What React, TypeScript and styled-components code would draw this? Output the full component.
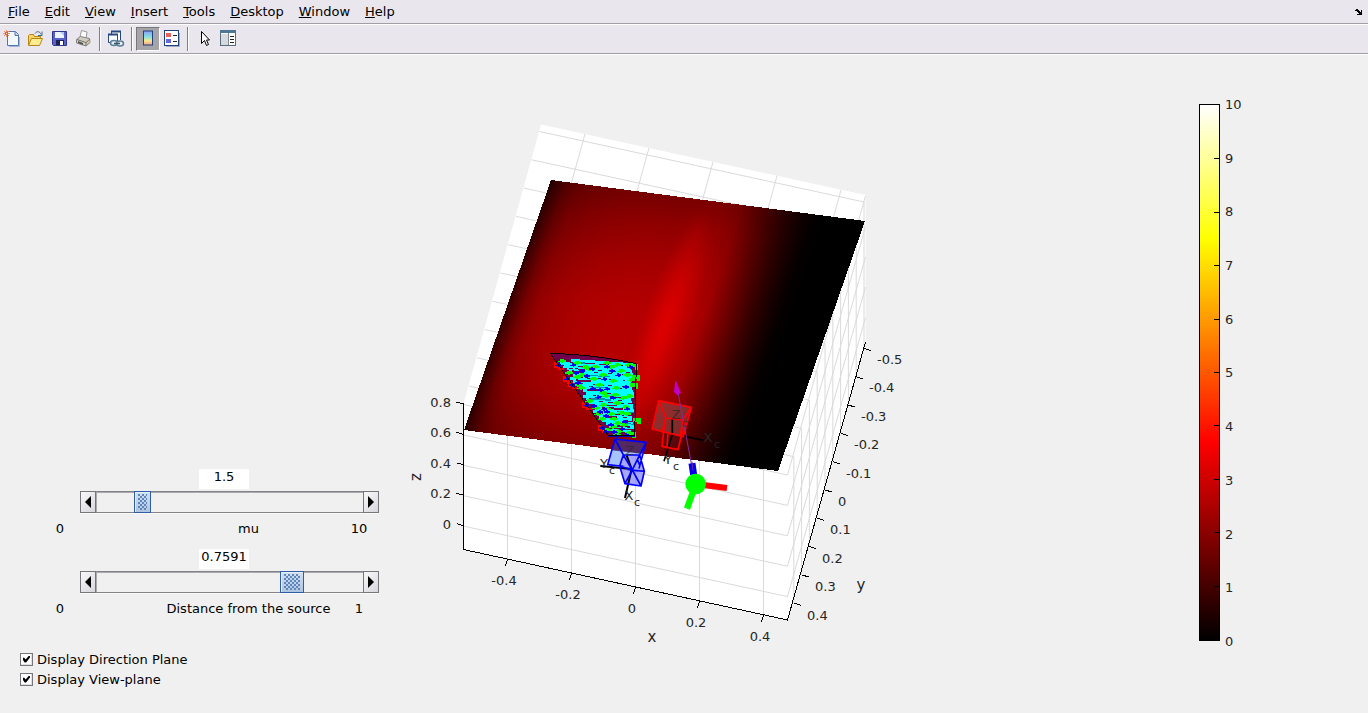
import React, { useState } from "react";
import styled, { createGlobalStyle } from "styled-components";

const GlobalStyle = createGlobalStyle`
  * { box-sizing: border-box; }
  body {
    margin: 0;
    background: #f0f0f0;
    color: #000;
    font-family: "DejaVu Sans", sans-serif;
    font-size: 13px;
  }
`;

const Page = styled.div`
  display: flex;
  flex-direction: column;
  min-height: 100vh;
`;

const MenuBar = styled.nav`
  display: flex;
  align-items: center;
  gap: 15px;
  height: 25px;
  padding: 0 6px 0 8px;
  background: #e9e7ed;
  border-bottom: 1px solid #fff;
  box-shadow: inset 0 -1px 0 #a09fa3;
`;

const MenuItem = styled.button`
  border: 0;
  padding: 0;
  background: none;
  color: inherit;
  font: inherit;
  line-height: 20px;
  &::first-letter { text-decoration: underline; }
`;

const DockButton = styled(MenuItem)`
  display: flex;
  margin-left: auto;
`;

const ToolBar = styled.div`
  display: flex;
  align-items: center;
  height: 30px;
  padding: 1px 0 2px;
  background: #e9e7ed;
  border-bottom: 1px solid #fff;
  box-shadow: inset 0 -1px 0 #a09fa3;
`;

const ToolButton = styled.button<{ $pressed?: boolean }>`
  display: flex;
  align-items: center;
  justify-content: center;
  width: 24px;
  height: 24px;
  padding: 0;
  border: 1px solid;
  border-color: ${(p) => (p.$pressed ? "#77767a #fff #fff #77767a" : "transparent")};
  background: ${(p) => (p.$pressed ? "#a5a4a8" : "none")};
`;

const Separator = styled.span`
  width: 2px;
  height: 24px;
  margin: 0 3px;
  background: #7f7e82;
  border-right: 1px solid #fff;
`;

const Figure = styled.main`
  display: grid;
  grid-template-columns: 400px minmax(0, 1fr) 200px;
  flex: 1;
`;

const Controls = styled.section`
  display: flex;
  flex-direction: column;
  justify-content: flex-end;
  gap: 10px;
  padding: 0 21px 24px 40px;
`;

const SliderGroup = styled.div`
  display: flex;
  flex-direction: column;
`;

const ValueBox = styled.input`
  width: 50px;
  height: 20px;
  margin: 0 0 2px 159px;
  padding: 0 0 5px;
  border: 0;
  background: #fff;
  color: inherit;
  font: inherit;
  text-align: center;
`;

const SliderRow = styled.div`
  display: flex;
  height: 22px;
  margin: 0 0 6px 40px;
  box-shadow: 0 1px 0 #fafafa;
`;

const StepButton = styled.button`
  display: flex;
  align-items: center;
  justify-content: center;
  width: 16px;
  padding: 0;
  border: 1px solid #77767a;
  background: linear-gradient(135deg, #f8f8fa, #d8d6dc);
`;

const Range = styled.input<{ $thumb: number }>`
  appearance: none;
  flex: 1;
  min-width: 0;
  margin: 0;
  border: solid #838286;
  border-width: 1px 0;
  background: #f0f0f0;
  box-shadow: inset 0 1px 0 #aaa9ad, inset 1px 0 0 #aaa9ad;
  &::-webkit-slider-thumb {
    appearance: none;
    width: ${(p) => p.$thumb}px;
    height: 22px;
    padding: 2px 3px;
    border: 1px solid #2f5ea3;
    box-shadow: inset 1px 1px 0 #e4eefa;
    background:
      linear-gradient(#5c83b8 0 0) 0 0 / 0 0 no-repeat,
      conic-gradient(#5c83b8 25%, transparent 0) 1px -1px / 4px 4px content-box content-box,
      conic-gradient(#5c83b8 25%, transparent 0) 3px 1px / 4px 4px content-box content-box,
      linear-gradient(#d3e1f1, #aec4df);
    background:
      radial-gradient(circle at 1px 1px, #5f86ba 0.8px, transparent 0.8px) 0 0 / 4px 4px content-box content-box,
      radial-gradient(circle at 1px 1px, #5f86ba 0.8px, transparent 0.8px) 2px 2px / 4px 4px content-box content-box,
      linear-gradient(#d3e1f1, #aec4df);
  }
`;

const Captions = styled.div`
  display: flex;
  line-height: 20px;
  text-align: center;
`;

const Bound = styled.span`
  width: 40px;
`;

const Caption = styled.label`
  flex: 1;
  padding-left: 78px;
  white-space: nowrap;
`;

const Options = styled.div`
  display: flex;
  flex-direction: column;
  margin: 20px 0 0 -20px;
`;

const Option = styled.label`
  display: flex;
  align-items: center;
  gap: 4px;
  height: 20px;
`;

const Tick = styled.input`
  appearance: none;
  display: flex;
  width: 13px;
  height: 13px;
  margin: 0;
  border: 1px solid #77767a;
  background: #fff;
  box-shadow: inset -1px -1px 0 #e0e0e2;
  &:checked::after {
    content: "";
    flex: 1;
    margin: 2px;
    background: #000;
    clip-path: polygon(0 32%, 18% 32%, 38% 58%, 86% 0, 100% 0, 100% 28%, 44% 100%, 24% 100%, 0 66%);
  }
`;

const Plot = styled.svg`
  display: block;
  width: 100%;
  height: auto;
  font-family: "DejaVu Sans", sans-serif;
  font-size: 13px;
`;

const Scale = styled.aside`
  display: flex;
  align-self: start;
  gap: 5px;
  height: 537px;
  margin: 49px 0 0 31px;
`;

const ScaleBar = styled.div`
  display: flex;
  flex-direction: column;
  justify-content: space-between;
  align-items: flex-end;
  width: 21px;
  border: 1px solid #000;
  background: linear-gradient(#fff 0%, #ff0 25%, #f00 63%, #000 100%);
`;

const ScaleMark = styled.i`
  width: 5px;
  height: 1px;
  background: #000;
  &:first-child { visibility: hidden; }
`;

const ScaleLabels = styled.div`
  display: flex;
  flex-direction: column;
  justify-content: space-between;
  margin: -7px 0 -9px;
  color: #262626;
  line-height: 16px;
`;

const Icon = ({ children }: { children: React.ReactNode }) => (
  <svg width="18" height="18" viewBox="0 0 18 18">{children}</svg>
);

const NewIcon = () => (
  <Icon>
    <path d="M4.500 1.500h8l3 3v11h-11z" fill="#f3f8ff" stroke="#5577a8" />
    <path d="M12 1.500v4h4" fill="#bdd4f2" stroke="#5577a8" />
    <path d="M16.500 7v9.500H6" fill="none" stroke="#a2b8d6" />
    <path d="M0 3.500h7M3.500 0v7M1 1l5 5M6 1L1 6" stroke="#e9906b" />
    <rect x="2.500" y="2.500" width="2" height="2" fill="#fff1b0" stroke="#e0633d" />
  </Icon>
);
const OpenIcon = () => (
  <Icon>
    <path d="M1.500 15V5.500l1-1h4l1 2h6v3" fill="#f6d566" stroke="#b98514" />
    <path d="M1.500 15.500l3-7h11l-3 7z" fill="#ffec8e" stroke="#b98514" />
    <path d="M8 3.500c2-3 5-2 6 1m1-3v4h-4" fill="none" stroke="#43698f" />
  </Icon>
);
const SaveIcon = () => (
  <Icon>
    <path d="M1.500 1.500h14v14h-13l-1-1z" fill="#5a60c8" stroke="#30368c" />
    <rect x="4" y="2" width="9" height="6" fill="#eef4ff" />
    <path d="M9 2h4v4z" fill="#b4c8ee" />
    <rect x="5" y="10" width="8" height="5" fill="#1b2151" />
    <rect x="9" y="11" width="3" height="4" fill="#fff" />
  </Icon>
);
const PrintIcon = () => (
  <Icon>
    <path d="M5 7l1.500-6.500L12 2l-1 7z" fill="#fff" stroke="#99989b" />
    <path d="M1.500 9.500l4-3 9 2 .5 4-4 3.500-9.500-3z" fill="#cfccc4" stroke="#85837d" />
    <path d="M2 9.500l9 3 4-3.500M11 12.500V16" fill="none" stroke="#77756f" />
    <path d="M3 11l5 2v2l-5-2z" fill="#555" />
    <path d="M12 13.500l3-2.500" stroke="#e8c24c" />
  </Icon>
);
const LinkIcon = () => (
  <Icon>
    <path d="M4.500 9V1.500h9V10" fill="#fff" stroke="#27487f" />
    <path d="M4 1.500h10" stroke="#27487f" strokeWidth="2" />
    <path d="M5 12.500H1.500v-8h9V11" fill="#f7faff" stroke="#27487f" />
    <path d="M1 4.500h10" stroke="#27487f" strokeWidth="2" />
    <ellipse cx="7" cy="13" rx="3.500" ry="2.500" fill="#e8eef4" stroke="#5f7d97" strokeWidth="1.500" />
    <ellipse cx="13" cy="13.500" rx="3.500" ry="2.500" fill="#e8eef4" stroke="#5f7d97" strokeWidth="1.500" />
    <path d="M7 13.500h6" stroke="#34556f" strokeWidth="1.500" />
  </Icon>
);
const ColorbarIcon = () => (
  <Icon>
    <defs>
      <linearGradient id="bar" x2="0" y2="1">
        <stop offset="0" stopColor="#8d9cf0" />
        <stop offset=".4" stopColor="#83dfe6" />
        <stop offset=".7" stopColor="#f3e88a" />
        <stop offset="1" stopColor="#f49a8a" />
      </linearGradient>
    </defs>
    <rect x="4.500" y="1" width="9" height="14" fill="url(#bar)" stroke="#21417b" />
  </Icon>
);
const LegendIcon = () => (
  <Icon>
    <path d="M16.500 3v13.500H3" fill="none" stroke="#9ba9c3" />
    <rect x="1.500" y=".5" width="14" height="15" fill="#fff" stroke="#21417b" />
    <rect x="3" y="3" width="5" height="4" fill="#e9605c" />
    <rect x="3" y="9" width="5" height="4" fill="#6666e0" />
    <path d="M10 5.500h4M10 11.500h4" stroke="#222" />
  </Icon>
);
const PointerIcon = () => (
  <Icon>
    <path d="M6.500 1.500v12l3-3 2 5 2-1-2-4.500h3z" fill="#fff" stroke="#000" />
  </Icon>
);
const InspectorIcon = () => (
  <Icon>
    <rect x="1.500" y=".5" width="15" height="15" fill="#fff" stroke="#5a6b80" />
    <rect x="1" y="0" width="16" height="3" fill="#4d7595" />
    <rect x="2" y="4" width="7" height="11" fill="#d6dadd" />
    <path d="M9.500 3v12" stroke="#7d8894" />
    <path d="M11 6.500h4M11 9.500h4M11 12.500h4" stroke="#222" />
  </Icon>
);

const STEPS = Array.from({ length: 10 }, (_, i) => i);
const X_TICKS = ["-0.4", "-0.2", "0", "0.2", "0.4"];
const Y_TICKS = ["-0.5", "-0.4", "-0.3", "-0.2", "-0.1", "0", "0.1", "0.2", "0.3", "0.4"];
const Z_TICKS = ["0.8", "0.6", "0.4", "0.2", "0"];

const Axes = () => (
  <g>
    <polygon points="463.500,404 541,124.500 865.500,195 865.500,342 787.500,620 463.500,549.500" fill="#fff" />
    <g stroke="#dadada" fill="none">
      {X_TICKS.map((t, i) => {
        const x = 507.5 + i * 64;
        const y = 559 + i * 14;
        return <path key={t} d={`M${x} ${y}V${y - 145.5}l77.500 -279.500`} />;
      })}
      {STEPS.map((i) => (
        <path key={i} d={`M${539.5 - i * 7.8} ${131.5 + i * 28.3}l324.500 70.500v145.500`} />
      ))}
      {Z_TICKS.map((t, i) => (
        <path key={t} d={`M463.500 ${404.5 + i * 30.4}l324 70.500l78 -279`} />
      ))}
    </g>
    <g stroke="#000" fill="none" shapeRendering="crispEdges">
      <path d="M463.500 404V549.500L787.500 620L865.500 342" />
      {X_TICKS.map((t, i) => (
        <path key={t} d={`M${507.5 + i * 64} ${559 + i * 14}l-2 7`} />
      ))}
      {STEPS.map((i) => (
        <path key={i} d={`M${864 - i * 7.8} ${348.5 + i * 28.3}l7 2`} />
      ))}
      {Z_TICKS.map((t, i) => (
        <path key={t} d={`M463.500 ${404 + i * 30.4}l-7 -2`} />
      ))}
    </g>
    <g fill="#262626">
      {X_TICKS.map((t, i) => (
        <text key={t} x={504 + i * 64} y={585 + i * 14} textAnchor="middle">{t}</text>
      ))}
      {Y_TICKS.map((t, i) => (
        <text key={t} x={877 - Math.round(i * 7.8)} y={364 + Math.round(i * 28.4)}>{t}</text>
      ))}
      {Z_TICKS.map((t, i) => (
        <text key={t} x={451} y={407 + Math.round(i * 30.4)} textAnchor="end">{t}</text>
      ))}
      <g fontSize="15" textAnchor="middle">
        <text x="652" y="642">x</text>
        <text x="861" y="590">y</text>
        <text transform="translate(421 477) rotate(-90)">z</text>
      </g>
    </g>
  </g>
);

// Irradiance across the plane as offset (percent) and red level.
const PROFILE: [number, number][] = [
  [0, 52], [2, 80], [5, 118], [9, 146], [15, 162], [24, 174], [34, 180], [42, 180],
  [50, 186], [56, 182], [61, 164], [65, 132], [70, 92], [75, 54], [80, 24], [84, 6], [88, 0], [100, 0],
];
// Falloff along the plane as offset (percent) and darkness.
const FALLOFF: [number, number][] = [
  [0, 0.34], [12, 0.2], [28, 0.08], [45, 0], [65, 0], [80, 0.06], [100, 0.26],
];

const SourcePlane = () => (
  <g transform="matrix(3.140 .41 -.87 2.500 551 180)" shapeRendering="crispEdges">
    <defs>
      <linearGradient id="profile">
        {PROFILE.map(([o, r]) => <stop key={o} offset={`${o}%`} stopColor={`rgb(${r},0,0)`} />)}
      </linearGradient>
      <linearGradient id="falloff" x2="0" y2="1">
        {FALLOFF.map(([o, a]) => <stop key={o} offset={`${o}%`} stopColor="#000" stopOpacity={a} />)}
      </linearGradient>
      <radialGradient id="ridge">
        <stop offset="0" stopColor="#e00000" stopOpacity=".95" />
        <stop offset=".4" stopColor="#dc0000" stopOpacity=".6" />
        <stop offset="1" stopColor="#c80000" stopOpacity="0" />
      </radialGradient>
    </defs>
    <rect width="100" height="100" fill="url(#profile)" />
    <rect width="100" height="100" fill="url(#falloff)" />
    <ellipse cx="50" cy="52" rx="8" ry="48" fill="url(#ridge)" />
  </g>
);

// Ray marks on the view plane, in thirds of a pixel.
const GREEN = [
  [50, 48], [95, 52], [118, 66], [132, 70], [148, 64], [185, 52], [196, 66], [215, 60], [252, 58], [70, 82],
  [96, 94], [110, 90], [146, 100], [172, 88], [226, 78], [246, 88], [98, 118], [106, 128], [160, 118], [202, 108],
  [212, 128], [256, 104], [172, 142], [182, 152], [208, 148], [232, 158], [252, 152], [132, 168], [172, 180], [184, 190],
  [152, 188], [216, 172], [240, 186], [196, 206], [226, 204], [244, 206], [170, 222], [206, 220], [216, 234], [236, 240],
  [202, 246], [186, 254], [222, 256], [250, 262], [214, 268], [158, 206],
];
const BLUE = [
  [84, 60], [112, 76], [142, 70], [186, 64], [200, 76], [256, 66], [92, 82], [126, 92],
  [178, 102], [220, 90], [98, 112], [144, 130], [166, 134], [186, 132], [242, 124], [158, 156],
  [204, 158], [146, 182], [176, 192], [186, 200], [164, 200], [246, 192], [182, 212],
  [198, 238], [240, 230], [184, 260], [206, 260], [230, 252], [214, 272], [244, 270],
];
const EDGE = [[40, 60], [66, 102], [80, 118], [122, 180], [172, 248]];
const RIGHT_EDGE = [[270, 66], [276, 100], [270, 124], [277, 230], [262, 270]];

const leftAt = (y: number) => 16 + ((y - 25) * 174) / 247;

const RAYS = Array.from({ length: 24 }, (_, r) => {
  const y = 46 + r * 9;
  const start = Math.min(leftAt(y) + 6 + ((r * 37) % 17) + (r < 1 ? 40 : 0), 200);
  return { y, start, end: 268 - ((r * 53) % 11) };
});

const ViewPlane = () => (
  <g transform="translate(545 345) scale(.3333)" shapeRendering="crispEdges">
    <path d="M16 25Q150 28 274 56L269 272H190Z" fill="#70004a" />
    {EDGE.map(([x, y]) => (
      <path key={y} d={`M${x - 12} ${y - 9}h12v6h6v12h12v6h-18v-6h-12z`} fill="#f00" />
    ))}
    {RAYS.map((r, i) => (
      <path
        key={r.y}
        d={`M${r.start} ${r.y}L${r.end} ${r.y + (r.end - r.start) * 0.07}`}
        stroke="#00ffff"
        strokeWidth={i % 5 === 3 ? 6 : 9}
      />
    ))}
    {RAYS.map((r, i) => {
      const from = r.start + 12 + ((i * 41) % 60);
      const to = Math.min(from + 30 + ((i * 29) % 40), 266);
      return (
        <path
          key={r.y}
          d={`M${from} ${r.y + 5 + (from - r.start) * 0.07}L${to} ${r.y + 5 + (to - r.start) * 0.07}`}
          stroke={i % 4 === 0 ? "#0090b0" : "#70004a"}
          strokeWidth={i % 3 === 0 ? 6 : 3}
        />
      );
    })}
    {GREEN.map(([x, y], i) => (
      <path key={i} d={`M${x - 11} ${y}h6v-5h12v3h6v6h-8v3h-7v-3h-9z`} fill="#0f0" />
    ))}
    {RIGHT_EDGE.map(([x, y], i) => (
      <path key={i} d={`M${x - 14} ${y - 10}h24v18h-11v-7h-13z`} fill="#0f0" />
    ))}
    {[...BLUE, ...EDGE].map(([x, y], i) => (
      <path key={i} d={`M${x - 9} ${y - 1}h6v-4h6v3h6v6h-5v3h-5v-3h-8z`} fill="#00f" />
    ))}
    <path d="M16 25Q150 28 274 56L269 272H190Z" fill="none" stroke="#000" strokeWidth="3" />
    <path d="M190 275h80" stroke="#00b" strokeWidth="5" />
  </g>
);

const Cameras = () => (
  <g>
    <g transform="translate(540 340) scale(.3333)" fill="none" strokeLinejoin="round">
      <path d="M356 182L454 202L430 290L336 267Z" fill="#8c5050" fillOpacity=".55" />
      <path d="M366 278L424 287L414 329L366 319Z" fill="#501018" fillOpacity=".5" />
      <path d="M397 238V283L378 345L372 364M424 287L490 301" stroke="#000" strokeWidth="5" />
      <path
        d="M356 182L454 202L430 290L336 267ZL378 234L428 240L454 202M378 234L366 278M428 240L421 287M375 240L366 319L414 329L424 287M384 280L381 321M436 244L414 329"
        stroke="#f00"
        strokeWidth="5"
      />
      <path d="M408 125L458 392" stroke="#7c2f9c" strokeWidth="3" />
      <path d="M406 121L423 158L412 166L402 156Z" fill="#c000c8" />
      <path d="M225 297L318 307L303 350L250 345L240 375L205 373Z" fill="#6d9dff" fillOpacity=".6" />
      <path d="M225 297L318 307L305 341L214 331Z" fill="#4c2058" fillOpacity=".85" />
      <path d="M250 345L297 347L312 395L303 437L255 430L240 375Z" fill="#7878ff" fillOpacity=".65" />
      <path d="M181 378L275 387M260 346L275 387L255 474" stroke="#000" strokeWidth="6" />
      <path
        d="M225 297L318 307L297 386M225 297L203 374L250 379M225 297L250 345H299L318 307M250 345L239 378L255 431L303 438L313 394L299 345M250 345L277 390L255 431M299 345L277 390L303 438M239 378L277 390L313 394M264 388L294 393M292 358L300 378"
        stroke="#00f"
        strokeWidth="5"
      />
      <path d="M456 370L461 404" stroke="#0000f0" strokeWidth="21" />
      <path d="M456 365L459 392" stroke="#7020a0" strokeWidth="3" />
      <path d="M490 435L561 444" stroke="#f00" strokeWidth="18" />
      <path d="M463 445L441 506" stroke="#0f0" strokeWidth="19" />
      <circle cx="467" cy="432" r="31" fill="#0f0" />
    </g>
    <g fill="#262626" textAnchor="middle">
      <text x="676" y="419" opacity=".7">Z</text>
      <text x="708" y="442">X</text>
      <text x="668" y="464">Y</text>
      <text x="630" y="455" opacity=".6">Z</text>
      <text x="604" y="468">Y</text>
      <text x="629" y="500">X</text>
      <g fontSize="11">
        <text x="685" y="427" opacity=".7">c</text>
        <text x="717" y="448">c</text>
        <text x="676" y="470">c</text>
        <text x="612" y="474">c</text>
        <text x="637" y="506">c</text>
      </g>
    </g>
  </g>
);

type SliderProps = { id: string; name: string; max: number; initial: number; thumb: number };

const Slider = ({ id, name, max, initial, thumb }: SliderProps) => {
  const [value, setValue] = useState(initial);
  const move = (d: number) => setValue((v) => Math.min(max, Math.max(0, v + (d * max) / 100)));
  return (
    <SliderGroup>
      <ValueBox
        aria-label={`${name} value`}
        value={Number(value.toFixed(4))}
        onChange={(e) => setValue(Number(e.target.value) || 0)}
      />
      <SliderRow>
        <StepButton aria-label={`Decrease ${name}`} onClick={() => move(-1)}>
          <svg width="6" height="12"><path d="M6 0V12L0 6Z" /></svg>
        </StepButton>
        <Range
          id={id}
          type="range"
          min={0}
          max={max}
          step={max / 10000}
          value={value}
          $thumb={thumb}
          onChange={(e) => setValue(Number(e.target.value))}
        />
        <StepButton aria-label={`Increase ${name}`} onClick={() => move(1)}>
          <svg width="6" height="12"><path d="M0 0V12L6 6Z" /></svg>
        </StepButton>
      </SliderRow>
      <Captions>
        <Bound>0</Bound>
        <Caption htmlFor={id}>{name}</Caption>
        <Bound>{max}</Bound>
      </Captions>
    </SliderGroup>
  );
};

export default function App() {
  const [direction, setDirection] = useState(true);
  const [view, setView] = useState(true);
  return (
    <Page>
      <GlobalStyle />
      <MenuBar>
        {["File", "Edit", "View", "Insert", "Tools", "Desktop", "Window", "Help"].map((m) => (
          <MenuItem key={m}>{m}</MenuItem>
        ))}
        <DockButton aria-label="Dock figure">
          <svg width="7" height="6" shapeRendering="crispEdges">
            <path d="M0 1h1v-1h2v1h1v1h1v1h1v-2h1v5h-5v-1h2v-1h-1v-1h-1v-1h-2z" />
          </svg>
        </DockButton>
      </MenuBar>
      <ToolBar>
        <ToolButton aria-label="New figure"><NewIcon /></ToolButton>
        <ToolButton aria-label="Open file"><OpenIcon /></ToolButton>
        <ToolButton aria-label="Save figure"><SaveIcon /></ToolButton>
        <ToolButton aria-label="Print figure"><PrintIcon /></ToolButton>
        <Separator />
        <ToolButton aria-label="Link plot"><LinkIcon /></ToolButton>
        <Separator />
        <ToolButton aria-label="Insert colorbar" $pressed><ColorbarIcon /></ToolButton>
        <ToolButton aria-label="Insert legend"><LegendIcon /></ToolButton>
        <Separator />
        <ToolButton aria-label="Edit plot"><PointerIcon /></ToolButton>
        <ToolButton aria-label="Open property inspector"><InspectorIcon /></ToolButton>
      </ToolBar>
      <Figure>
        <Controls>
          <Slider id="mu" name="mu" max={10} initial={1.5} thumb={17} />
          <Slider id="distance" name="Distance from the source" max={1} initial={0.7591} thumb={24} />
          <Options>
            <Option>
              <Tick type="checkbox" checked={direction} onChange={(e) => setDirection(e.target.checked)} />
              Display Direction Plane
            </Option>
            <Option>
              <Tick type="checkbox" checked={view} onChange={(e) => setView(e.target.checked)} />
              Display View-plane
            </Option>
          </Options>
        </Controls>
        <Plot viewBox="400 55 768 658">
          <Axes />
          <SourcePlane />
          {view && <ViewPlane />}
          {direction && <Cameras />}
        </Plot>
        <Scale>
          <ScaleBar>
            {Array.from({ length: 11 }, (_, i) => <ScaleMark key={i} />)}
          </ScaleBar>
          <ScaleLabels>
            {Array.from({ length: 11 }, (_, i) => <span key={i}>{10 - i}</span>)}
          </ScaleLabels>
        </Scale>
      </Figure>
    </Page>
  );
}
